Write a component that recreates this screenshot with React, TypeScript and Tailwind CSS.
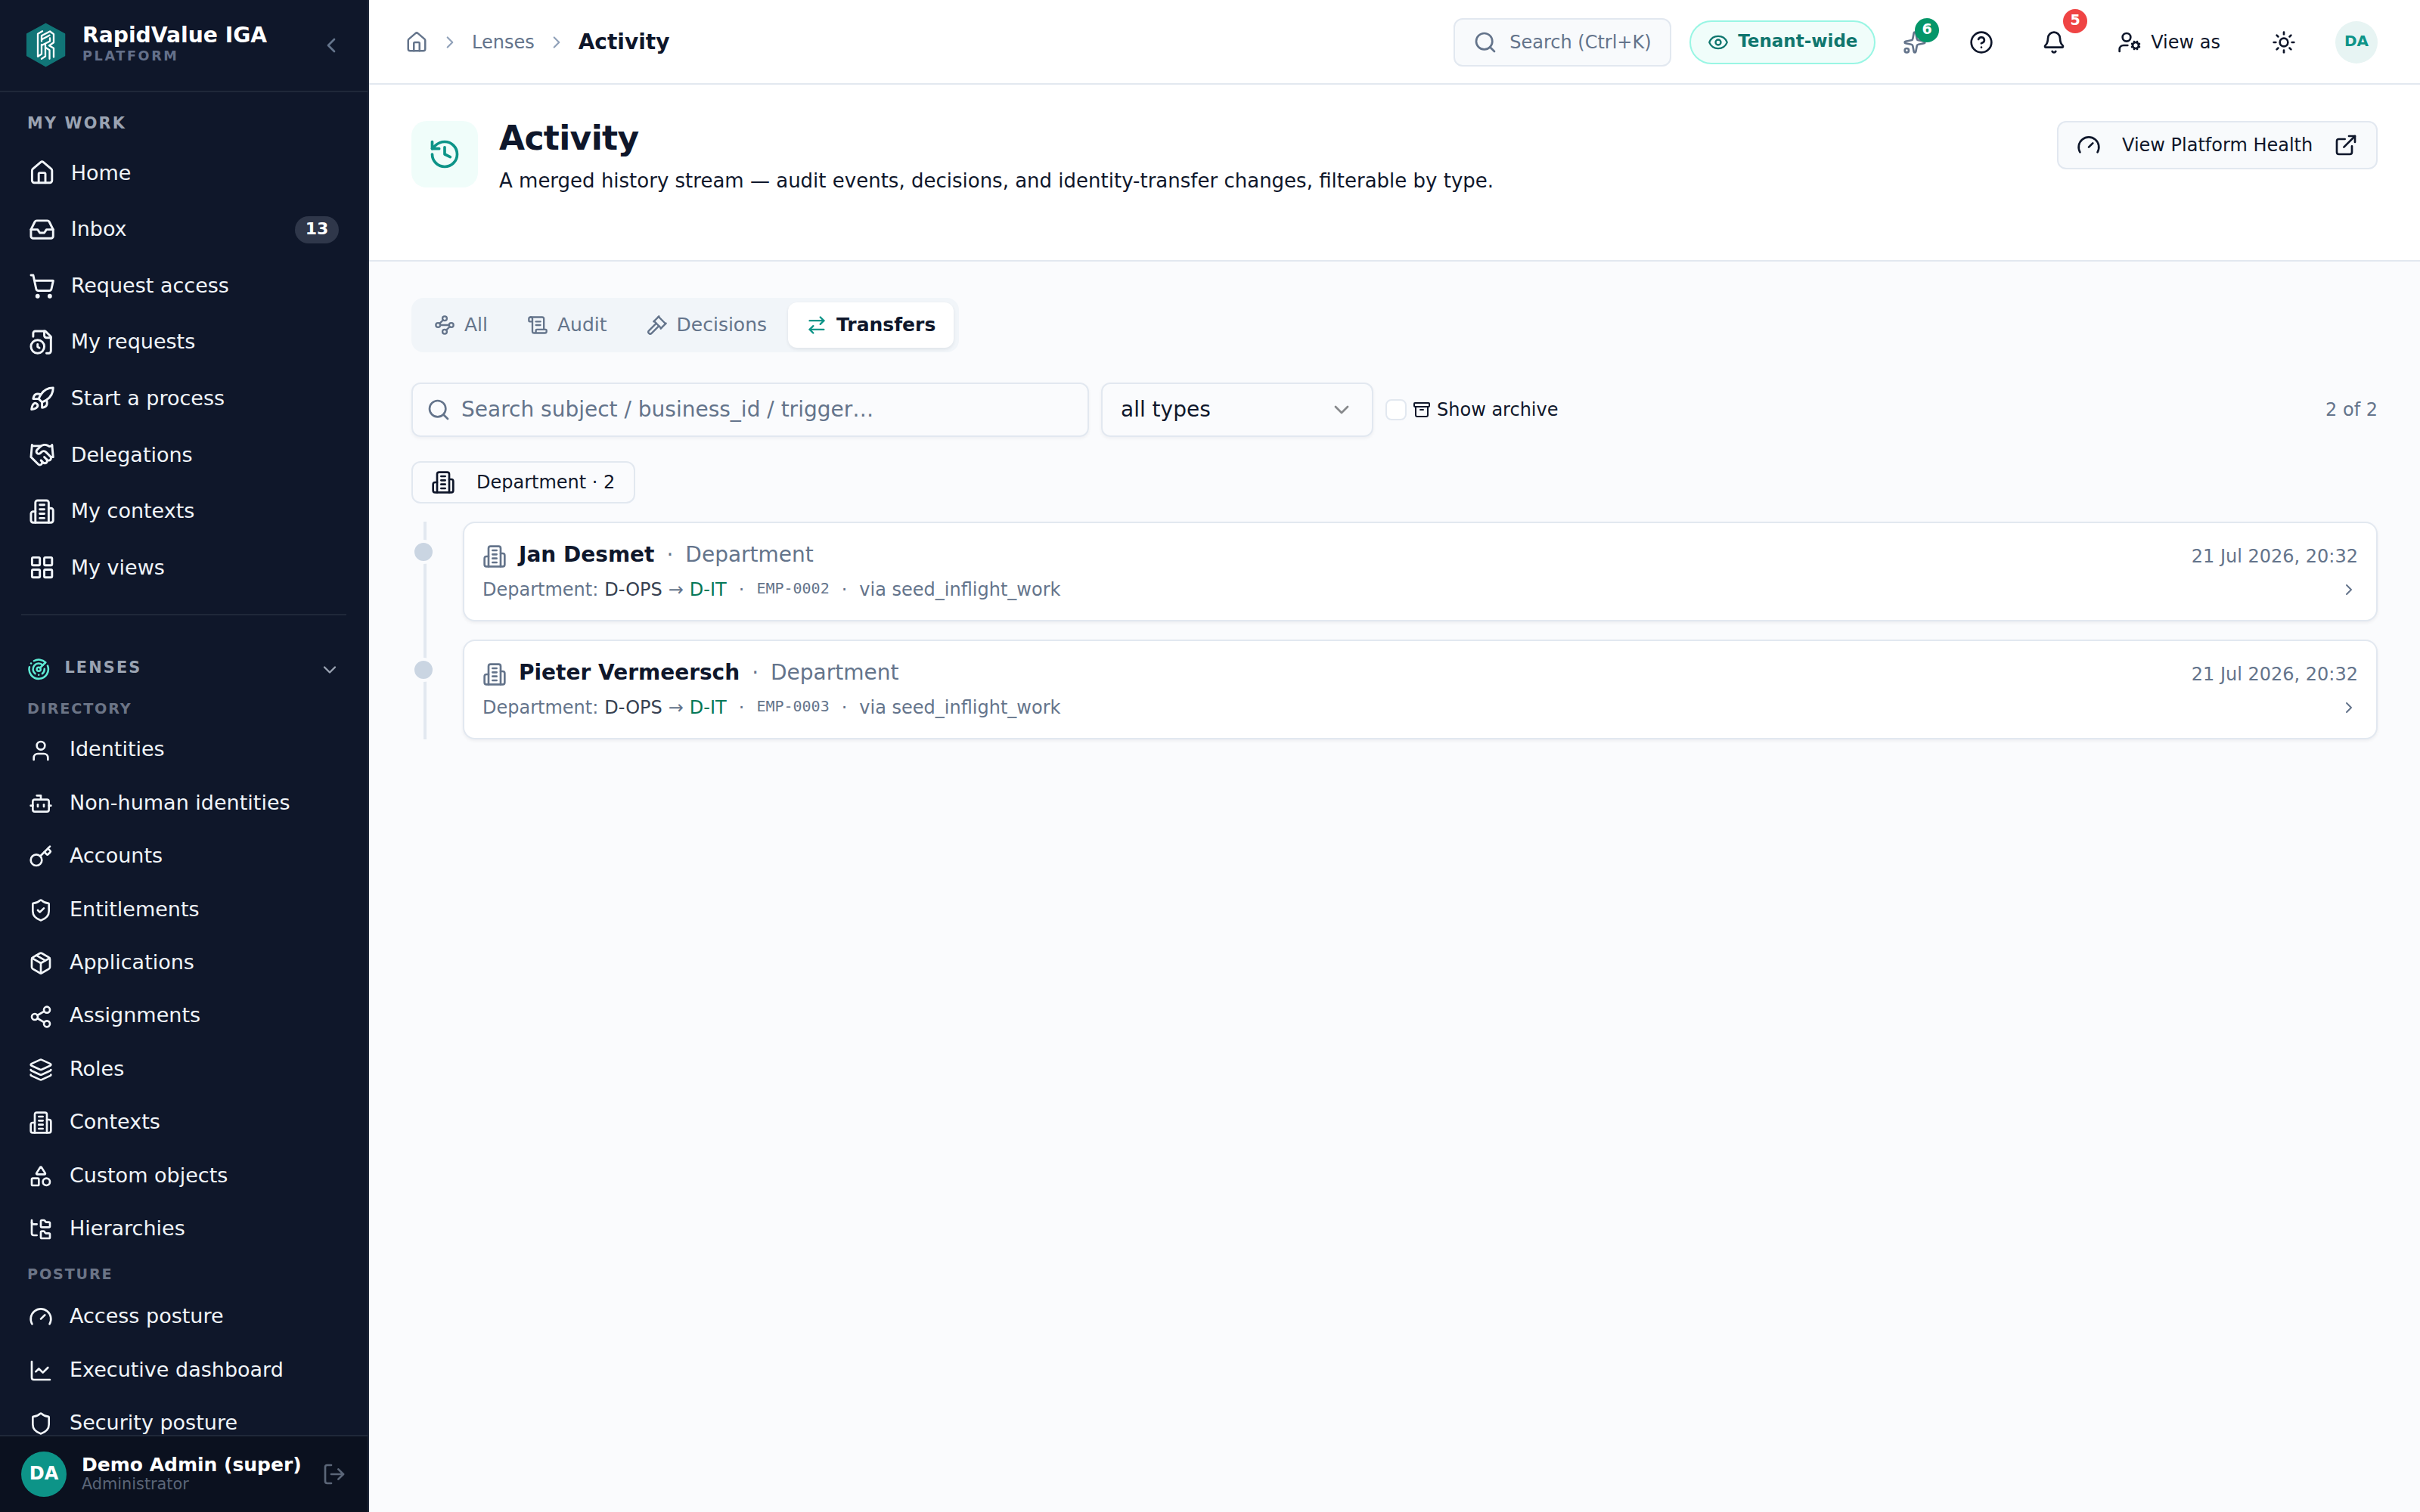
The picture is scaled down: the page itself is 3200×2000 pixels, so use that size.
import type { ComponentType, ReactNode } from "react";
import {
  Archive, ArrowRightLeft, Bell, Bot, ChartLine, ChevronDown, ChevronLeft, ChevronRight,
  CircleQuestionMark, ExternalLink, Eye, FolderTree, Gauge, Gavel, Handshake, History, House,
  Inbox, Key, Layers, LayoutGrid, LogOut, Package, Radar, Rocket, ScrollText, Search, Shapes,
  Share2, Shield, ShieldCheck, ShoppingCart, Sparkles, Sun, User, UserCog, Waypoints,
} from "lucide-react";

type Icon = ComponentType<{ className?: string }>;

function Building({ className }: { className?: string }) {
  return (
    <svg className={className} viewBox="0 0 24 24" fill="none" stroke="currentColor" strokeWidth="2" strokeLinecap="round" strokeLinejoin="round">
      <path d="M6 22V4a2 2 0 0 1 2-2h8a2 2 0 0 1 2 2v18Z" />
      <path d="M6 12H4a2 2 0 0 0-2 2v6a2 2 0 0 0 2 2h2" />
      <path d="M18 9h2a2 2 0 0 1 2 2v9a2 2 0 0 1-2 2h-2" />
      <path d="M10 6h4M10 10h4M10 14h4M10 18h4" />
    </svg>
  );
}

function FileClock({ className }: { className?: string }) {
  return (
    <svg className={className} viewBox="0 0 24 24" fill="none" stroke="currentColor" strokeWidth="2" strokeLinecap="round" strokeLinejoin="round">
      <path d="M16 22h2a2 2 0 0 0 2-2V7l-5-5H6a2 2 0 0 0-2 2v3" />
      <path d="M14 2v4a2 2 0 0 0 2 2h4" />
      <circle cx="8" cy="16" r="6" />
      <path d="M8 14v2.2l1.6 1" />
    </svg>
  );
}

function Logo() {
  return (
    <svg className="size-16 shrink-0" viewBox="0 0 64 64" fill="none">
      <path d="M32.500 3.300 57.500 17v28.500L32.500 59.700 7.700 45.500V17z" fill="#117577" stroke="#117577" strokeWidth="1.500" strokeLinejoin="round" />
      <g stroke="#fff" strokeWidth="2.300" strokeLinecap="round" strokeLinejoin="round">
        <path d="M28 13.300 22 16.800v30l5-3.300V31" />
        <path d="M27 26.500v-7.300l11-5.700 5 3.700v11l-6 4 6 3.600v11.700" />
        <path d="M37.500 18.800 28 23.800M38 22.500v4L27 32" />
        <path d="M32 31v15.500l-5 3.300" />
        <path d="M32 34.800l5.500 3.400v11.600" />
      </g>
    </svg>
  );
}

const myWork: { label: string; icon: Icon; count?: number }[] = [
  { label: "Home", icon: House },
  { label: "Inbox", icon: Inbox, count: 13 },
  { label: "Request access", icon: ShoppingCart },
  { label: "My requests", icon: FileClock },
  { label: "Start a process", icon: Rocket },
  { label: "Delegations", icon: Handshake },
  { label: "My contexts", icon: Building },
  { label: "My views", icon: LayoutGrid },
];

const directory: { label: string; icon: Icon }[] = [
  { label: "Identities", icon: User },
  { label: "Non-human identities", icon: Bot },
  { label: "Accounts", icon: Key },
  { label: "Entitlements", icon: ShieldCheck },
  { label: "Applications", icon: Package },
  { label: "Assignments", icon: Share2 },
  { label: "Roles", icon: Layers },
  { label: "Contexts", icon: Building },
  { label: "Custom objects", icon: Shapes },
  { label: "Hierarchies", icon: FolderTree },
];

const posture: { label: string; icon: Icon }[] = [
  { label: "Access posture", icon: Gauge },
  { label: "Executive dashboard", icon: ChartLine },
  { label: "Security posture", icon: Shield },
];

const tabs: { label: string; icon: Icon; active?: boolean }[] = [
  { label: "All", icon: Waypoints },
  { label: "Audit", icon: ScrollText },
  { label: "Decisions", icon: Gavel },
  { label: "Transfers", icon: ArrowRightLeft, active: true },
];

const transfers = [
  { name: "Jan Desmet", id: "EMP-0002", date: "21 Jul 2026, 20:32" },
  { name: "Pieter Vermeersch", id: "EMP-0003", date: "21 Jul 2026, 20:32" },
];

function LensItem({ label, icon: Icon }: { label: string; icon: Icon }) {
  return (
    <a className="flex h-[70.4px] items-center gap-[22px] pl-[38px] text-[27px] text-slate-100">
      <Icon className="mt-0.5 size-8 shrink-0" />
      {label}
    </a>
  );
}

function GroupLabel({ children }: { children: ReactNode }) {
  return <div className="pl-9 text-[19.2px] leading-6 font-bold tracking-[0.095em] text-[#6b7486]">{children}</div>;
}

function Sidebar() {
  return (
    <aside className="flex h-full w-[488px] shrink-0 flex-col border-r-2 border-[#1f2839] bg-[#0f172a]">
      <div className="flex h-[122px] shrink-0 items-center gap-[17px] border-b-2 border-[#1f2839] pr-8 pl-7">
        <Logo />
        <div className="flex-1 pb-[5px]">
          <div className="text-[28.2px] leading-8 font-bold whitespace-nowrap text-white">RapidValue IGA</div>
          <div className="text-[17.6px] leading-[22px] font-bold tracking-[0.15em] text-[#64708a]">PLATFORM</div>
        </div>
        <ChevronLeft className="size-8 text-[#64748b]" />
      </div>

      <nav className="min-h-0 flex-1 overflow-hidden">
        <div className="pt-[29px] pl-9 text-[20.8px] leading-6 font-bold tracking-[0.105em] text-[#9aa3b2]">MY WORK</div>
        <div className="mt-[16.7px]">
          {myWork.map(({ label, icon: Icon, count }) => (
            <a key={label} className="flex h-[74.57px] items-center pr-[38px] pl-[37.5px] text-[27px] text-slate-100">
              <Icon className="mr-[21px] size-[35.2px] shrink-0" />
              {label}
              {count && (
                <span className="ml-auto flex h-9 w-[58px] items-center justify-center rounded-full bg-[#2f374a] pb-[3px] text-[22px] font-bold text-white">
                  {count}
                </span>
              )}
            </a>
          ))}
        </div>

        <div className="mx-7 mt-[23.7px] h-0.5 bg-[#1f2839]" />

        <div className="mt-[51px] flex h-10 items-center pr-9 pl-9">
          <Radar className="size-[30.4px] text-[#5eead4]" />
          <span className="ml-[19px] pb-0.5 text-[20.8px] font-bold tracking-[0.105em] text-[#9aa3b2]">LENSES</span>
          <ChevronDown className="ml-auto mt-0.5 size-7 text-[#9aa3b2]" />
        </div>

        <div className="pt-[21px]">
          <GroupLabel>DIRECTORY</GroupLabel>
        </div>
        <div className="pt-[6.6px]">
          {directory.map((item) => <LensItem key={item.label} {...item} />)}
        </div>
        <div className="pt-3.5">
          <GroupLabel>POSTURE</GroupLabel>
        </div>
        <div className="pt-[7.8px]">
          {posture.map((item) => <LensItem key={item.label} {...item} />)}
        </div>
      </nav>

      <div className="flex h-[102px] shrink-0 items-center border-t-2 border-[#1f2839] bg-[#0b111f] pr-7 pl-7">
        <span className="flex size-15 items-center justify-center rounded-full bg-[#0d9488] pb-0.5 text-[24px] font-bold text-white">DA</span>
        <div className="ml-5 flex-1">
          <div className="text-[25px] leading-[27px] font-bold whitespace-nowrap text-white">Demo Admin (super)</div>
          <div className="text-[20.8px] leading-[25px] text-[#5b6678]">Administrator</div>
        </div>
        <LogOut className="size-8 text-[#5b6678]" />
      </div>
    </aside>
  );
}

function TopBar() {
  return (
    <header className="flex h-28 shrink-0 items-center border-b-2 border-slate-200 bg-white pt-0.5 pr-14 pl-12 text-[24px] text-slate-900">
      <div className="flex items-center gap-4 text-[#64748b]">
        <House className="size-[30px]" />
        <ChevronRight className="size-[26px] text-slate-400" />
        <span>Lenses</span>
        <ChevronRight className="size-[26px] text-slate-400" />
        <span className="text-[28px] font-bold text-slate-900">Activity</span>
      </div>

      <div className="ml-auto flex h-16 w-72 items-center gap-4 rounded-xl border-2 border-slate-200 bg-slate-50 pl-6 text-[#64748b]">
        <Search className="size-8" />
        <span className="whitespace-nowrap">Search (Ctrl+K)</span>
      </div>
      <div className="ml-6 flex h-[58px] w-[246px] items-center gap-3 rounded-full border-2 border-[#99f6e4] bg-[#f0fdfa] pl-[22px] text-[#0f766e]">
        <Eye className="size-7" />
        <span className="pb-[3px] text-[23px] font-bold whitespace-nowrap">Tenant-wide</span>
      </div>
      <div className="relative ml-9 text-[#64748b]">
        <Sparkles className="size-8" />
        <span className="absolute -top-4 left-4 flex size-8 items-center justify-center rounded-full bg-[#059669] pb-1 text-[19px] font-bold text-white">6</span>
      </div>
      <CircleQuestionMark className="ml-14 size-8" />
      <div className="relative ml-16">
        <Bell className="size-8" />
        <span className="absolute -top-7 left-7 flex size-8 items-center justify-center rounded-full bg-[#ef4444] pb-1 text-[19px] font-bold text-white">5</span>
      </div>
      <UserCog className="ml-17 size-8" />
      <span className="ml-3 whitespace-nowrap">View as</span>
      <Sun className="ml-17 size-8" />
      <span className="ml-13 flex size-14 items-center justify-center rounded-full bg-[#e7f4f3] pb-[5px] text-[20px] font-bold text-[#0d9488]">DA</span>
    </header>
  );
}

function PageHeader() {
  return (
    <section className="flex h-[234px] shrink-0 items-start border-b-2 border-slate-200 bg-white px-14 pt-12 text-slate-900">
      <div className="flex size-22 items-center justify-center rounded-[20px] bg-[#f0fdfa]">
        <History className="size-11 text-[#0d9488]" />
      </div>
      <div className="-mt-[3px] ml-7">
        <h1 className="text-[44px] leading-[52px] font-bold tracking-[-0.015em]">Activity</h1>
        <p className="mt-2.5 text-[26px] leading-10">
          A merged history stream — audit events, decisions, and identity-transfer changes, filterable by type.
        </p>
      </div>
      <button className="ml-auto flex h-16 w-[424px] items-center rounded-xl border-2 border-slate-200 bg-slate-50 pl-6 text-[24px]">
        <Gauge className="size-8" />
        <span className="ml-7 whitespace-nowrap">View Platform Health</span>
        <ExternalLink className="ml-7 size-8" />
      </button>
    </section>
  );
}

function TransferCard({ name, id, date }: { name: string; id: string; date: string }) {
  return (
    <article className="h-[132px] rounded-2xl border-2 border-slate-200 bg-white px-6 pt-[22px] text-[#64748b] shadow-[0_2px_4px_rgba(15,23,42,0.06)]">
      <div className="flex h-10 items-center text-[28px]">
        <Building className="mt-1 size-8" />
        <span className="ml-4 font-bold text-slate-900">{name}</span>
        <span className="mx-4">·</span>
        <span>Department</span>
        <time className="ml-auto pt-1 text-[24px]">{date}</time>
      </div>
      <div className="mt-1.5 flex h-10 items-center text-[24px]">
        <span>Department:</span>
        <span className="ml-2 text-[#374151]">D-OPS</span>
        <span className="mx-2">→</span>
        <span className="text-[#047857]">D-IT</span>
        <span className="mx-4">·</span>
        <span className="pb-[5px] font-['DejaVu_Sans_Mono',monospace] text-[20px]">{id}</span>
        <span className="mx-4">·</span>
        <span>via seed_inflight_work</span>
        <ChevronRight className="ml-auto size-6" />
      </div>
    </article>
  );
}

export default function App() {
  return (
    <div className="flex h-[2000px] w-[3200px] overflow-hidden bg-[#fafbfd] font-['DejaVu_Sans',sans-serif]">
      <Sidebar />
      <div className="flex min-w-0 flex-1 flex-col">
        <TopBar />
        <PageHeader />

        <main className="px-14 pt-12 text-slate-900">
          {/* Stream tabs */}
          <div className="flex h-18 w-[724px] items-center gap-1 rounded-2xl bg-slate-100 px-1.5 text-[25px] text-[#64748b]">
            {tabs.map(({ label, icon: Icon, active }) => (
              <button
                key={label}
                className={
                  active
                    ? "flex h-15 items-center gap-3 rounded-xl bg-white px-6 font-bold text-slate-900 shadow-[0_2px_4px_rgba(15,23,42,0.08)]"
                    : "flex h-15 items-center gap-3 px-6"
                }
              >
                <Icon className={active ? "size-7 text-[#0d9488]" : "size-7"} />
                <span className="pb-px">{label}</span>
              </button>
            ))}
          </div>

          {/* Filters */}
          <div className="mt-10 flex h-18 items-center">
            <div className="flex h-18 w-[896px] items-center gap-3.5 rounded-xl border-2 border-slate-200 pl-[18px] text-[28px] text-[#64748b] shadow-[0_2px_4px_rgba(15,23,42,0.05)]">
              <Search className="size-8" />
              <span className="whitespace-nowrap">Search subject / business_id / trigger…</span>
            </div>
            <div className="ml-4 flex h-18 w-[360px] items-center justify-between rounded-xl border-2 border-slate-200 pr-6 pl-6 text-[28px] shadow-[0_2px_4px_rgba(15,23,42,0.05)]">
              all types
              <ChevronDown className="size-8 text-[#87898c]" />
            </div>
            <label className="ml-4 flex items-center text-[24px]">
              <span className="size-7 rounded-lg border-2 border-slate-200 bg-white" />
              <Archive className="ml-2 size-6" />
              <span className="ml-2">Show archive</span>
            </label>
            <span className="ml-auto text-[24px] text-[#64748b]">2 of 2</span>
          </div>

          <button className="mt-8 flex h-14 w-[296px] items-center rounded-xl border-2 border-slate-200 pl-6 text-[24px]">
            <Building className="size-8" />
            <span className="ml-7 whitespace-nowrap">Department · 2</span>
          </button>

          {/* Timeline */}
          <div className="relative mt-6 flex flex-col gap-6">
            <div className="absolute top-0 bottom-0 left-4 w-1 bg-slate-200" />
            {transfers.map((transfer) => (
              <div key={transfer.id} className="relative pl-17">
                <span className="absolute top-6 left-0 size-8 rounded-full border-4 border-[#fafbfd] bg-slate-300" />
                <TransferCard {...transfer} />
              </div>
            ))}
          </div>
        </main>
      </div>
    </div>
  );
}
